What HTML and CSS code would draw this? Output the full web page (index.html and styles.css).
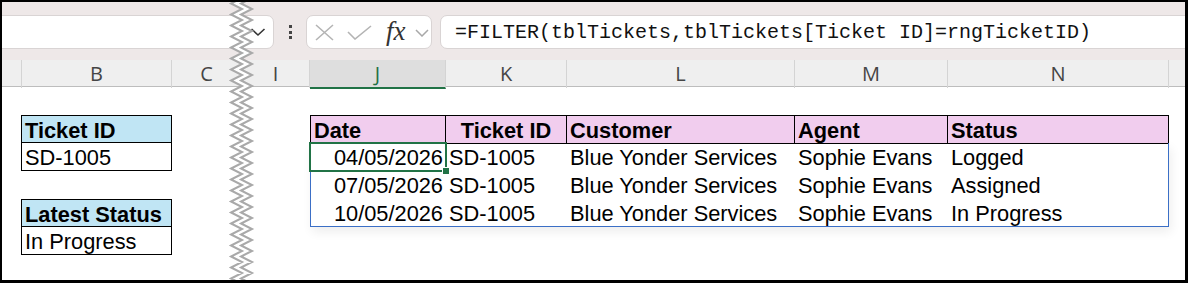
FILE: index.html
```html
<!DOCTYPE html>
<html>
<head>
<meta charset="utf-8">
<link rel="stylesheet" href="styles.css">
</head>
<body>
<div class="frame">
  <div class="fbar">
    <div class="namebox">
      <svg class="nb-chev" width="16" height="10" viewBox="0 0 16 10"><polyline points="1.5,2 8,8 14.5,2" fill="none" stroke="#333" stroke-width="1.6"/></svg>
    </div>
    <div class="dots"><span></span><span></span><span></span></div>
    <div class="fxgroup">
      <svg class="ic-x" width="19" height="17" viewBox="0 0 19 17"><path d="M1 1 L18 16 M18 1 L1 16" stroke="#b4b4b4" stroke-width="1.6" fill="none"/></svg>
      <svg class="ic-check" width="25" height="15" viewBox="0 0 25 15"><polyline points="1,7 8,14 24,1" fill="none" stroke="#b4b4b4" stroke-width="1.6"/></svg>
      <span class="fx">fx</span>
      <svg class="fx-chev" width="14" height="8" viewBox="0 0 14 8"><polyline points="1,1 7,7 13,1" fill="none" stroke="#a8a8a8" stroke-width="1.5"/></svg>
    </div>
    <div class="formula">=FILTER(tblTickets,tblTickets[Ticket ID]=rngTicketID)</div>
  </div>

  <div class="colheads">
    <div class="ch"></div>
    <div class="ch">B</div>
    <div class="ch">C</div>
    <div class="ch">I</div>
    <div class="ch sel">J</div>
    <div class="ch">K</div>
    <div class="ch">L</div>
    <div class="ch">M</div>
    <div class="ch">N</div>
    <div class="ch last"></div>
  </div>

  <div class="sheet">
    <div class="box box-ticket">
      <div class="box-head">Ticket ID</div>
      <div class="box-val">SD-1005</div>
    </div>
    <div class="box box-status">
      <div class="box-head">Latest Status</div>
      <div class="box-val">In Progress</div>
    </div>

    <div class="tbl">
      <div class="thead">
        <div class="th">Date</div>
        <div class="th center">Ticket ID</div>
        <div class="th">Customer</div>
        <div class="th">Agent</div>
        <div class="th">Status</div>
      </div>
      <div class="tbody">
        <div class="tr">
          <div class="td right active">04/05/2026</div>
          <div class="td">SD-1005</div>
          <div class="td">Blue Yonder Services</div>
          <div class="td">Sophie Evans</div>
          <div class="td">Logged</div>
        </div>
        <div class="tr">
          <div class="td right">07/05/2026</div>
          <div class="td">SD-1005</div>
          <div class="td">Blue Yonder Services</div>
          <div class="td">Sophie Evans</div>
          <div class="td">Assigned</div>
        </div>
        <div class="tr">
          <div class="td right">10/05/2026</div>
          <div class="td">SD-1005</div>
          <div class="td">Blue Yonder Services</div>
          <div class="td">Sophie Evans</div>
          <div class="td">In Progress</div>
        </div>
      </div>
    </div>
  </div>

  <svg class="tear" width="30" height="283" viewBox="226 0 30 283">
    <polygon class="tear-fill" points=""/>
    <polyline class="tear-l" points=""/>
    <polyline class="tear-r" points=""/>
  </svg>
</div>
<script>
(function(){
  var l=[], period=11, y=-2, i=0;
  while (y < 290) {
    var xl = (i % 2 === 0) ? 242 : 231;
    l.push([xl, y]);
    y += period/2; i++;
  }
  var lp = l.map(function(p){return p[0]+','+p[1];}).join(' ');
  var rp = l.map(function(p){return (p[0]+10)+','+p[1];}).join(' ');
  var fill = lp + ' ' + l.slice().reverse().map(function(p){return (p[0]+10)+','+p[1];}).join(' ');
  document.querySelector('.tear-l').setAttribute('points', lp);
  document.querySelector('.tear-r').setAttribute('points', rp);
  document.querySelector('.tear-fill').setAttribute('points', fill);
})();
</script>
</body>
</html>
```

FILE: styles.css
```css
html, body {
  margin: 0;
  padding: 0;
  background: #fff;
}

.frame {
  position: relative;
  width: 1188px;
  height: 283px;
  box-sizing: border-box;
  border: 2px solid #000;
  border-right-width: 3px;
  border-bottom-width: 3px;
  overflow: hidden;
  background: #fff;
  font-family: "Liberation Sans", Arial, sans-serif;
  color: #000;
}

/* ---------- formula bar ---------- */
.fbar {
  height: 58px;
  box-sizing: border-box;
  padding-top: 13px;
  background: #eee8e8;
  display: flex;
  align-items: flex-start;
}

.namebox {
  margin-left: -10px;
  width: 282px;
  height: 34px;
  box-sizing: border-box;
  background: #fff;
  border: 1px solid #d9d4d4;
  border-radius: 7px;
  display: flex;
  align-items: center;
  justify-content: flex-end;
  padding-right: 7px;
}

.dots {
  margin-left: 15px;
  width: 4px;
  height: 34px;
  display: flex;
  flex-direction: column;
  justify-content: center;
  gap: 2.5px;
}
.dots span {
  display: block;
  width: 3px;
  height: 3px;
  background: #444;
}

.fxgroup {
  margin-left: 13px;
  width: 126px;
  height: 34px;
  box-sizing: border-box;
  background: #fff;
  border: 1px solid #d9d4d4;
  border-radius: 7px;
  display: flex;
  align-items: center;
  padding-left: 8px;
}
.ic-check { margin-left: 13px; margin-top: 1px; }
.fx {
  margin-left: 14px;
  font-family: "Liberation Serif", "Times New Roman", serif;
  font-style: italic;
  font-size: 27px;
  line-height: 30px;
  color: #333;
  margin-top: -3px;
}
.fx-chev { margin-left: 9px; margin-top: 2px; }

.formula {
  margin-left: 8px;
  flex: 1;
  margin-right: -10px;
  height: 34px;
  box-sizing: border-box;
  background: #fff;
  border: 1px solid #d9d4d4;
  border-radius: 7px;
  padding-left: 14px;
  font-family: "Liberation Mono", "DejaVu Sans Mono", monospace;
  font-size: 20px;
  letter-spacing: 0;
  line-height: 33px;
  color: #111;
  white-space: nowrap;
}

/* ---------- column headers ---------- */
.colheads,
.sheet {
  display: grid;
  grid-template-columns: 20px 150px 70px 68px 136px 121px 228px 153px 221px 1fr;
}
.colheads {
  height: 27px;
  box-sizing: border-box;
  background: #efefef;
  border-bottom: 1px solid #bdbdbd;
}
.ch {
  box-sizing: border-box;
  border-right: 1px solid #d4d4d4;
  font-family: "Open Sans", "Noto Sans", sans-serif;
  font-size: 20px;
  line-height: 27px;
  color: #454545;
  text-align: center;
}
.ch.last { border-right: 0; }
.ch.sel {
  background: #dedede;
  color: #1e7145;
  border-bottom: 2px solid #217346;
  margin-bottom: -1px;
}

/* ---------- sheet ---------- */
.sheet {
  grid-template-rows: 28px 28px 28px 28px 28px 28px 1fr;
  height: 196px;
  font-size: 21.8px;
}

.box {
  grid-column: 2;
  margin-left: -1px;
  border: 1px solid #000;
  display: flex;
  flex-direction: column;
}
.box-ticket { grid-row: 2 / 4; }
.box-status { grid-row: 5 / 7; }
.box-head {
  height: 27px;
  box-sizing: border-box;
  background: #c0e5f4;
  border-bottom: 1px solid #000;
  font-weight: bold;
  padding: 2px 0 0 3px;
  line-height: 25px;
}
.box-val {
  flex: 1;
  padding: 2px 0 0 3px;
  line-height: 25px;
}

.tbl {
  grid-column: 5 / 10;
  grid-row: 2 / 6;
  display: flex;
  flex-direction: column;
}
.thead {
  display: grid;
  grid-template-columns: 136px 121px 228px 153px 221px;
  height: 28px;
}
.th {
  box-sizing: border-box;
  background: #f1cdee;
  border-top: 1px solid #000;
  border-bottom: 1px solid #000;
  border-right: 1px solid #000;
  font-weight: bold;
  line-height: 25px;
  padding: 2px 0 0 3px;
}
.th:first-child { border-left: 1px solid #000; }
.th.center { text-align: center; padding-left: 0; }

.tbody {
  flex: 1;
  border: 1px solid #3b6fc6;
  border-top: 0;
  box-shadow: 2px 5px 10px rgba(0, 0, 0, 0.07);
  display: flex;
  flex-direction: column;
}
.tr {
  display: grid;
  grid-template-columns: 135px 121px 228px 153px 220px;
  height: 28px;
}
.tr:last-child { height: 27px; }
.td {
  position: relative;
  box-sizing: border-box;
  line-height: 26px;
  padding: 2px 0 0 3px;
  white-space: nowrap;
}
.td.right {
  text-align: right;
  padding-left: 0;
  padding-right: 3px;
}
.td.active::after {
  content: "";
  position: absolute;
  top: -1px;
  left: -2px;
  right: -1px;
  bottom: -1px;
  border: 2px solid #217346;
}
.td.active::before {
  content: "";
  position: absolute;
  right: -3px;
  bottom: -3px;
  width: 6px;
  height: 6px;
  background: #217346;
  border-left: 1px solid #fff;
  border-top: 1px solid #fff;
  z-index: 1;
}

/* ---------- torn edge ---------- */
.tear {
  position: absolute;
  left: 224px;
  top: -2px;
}
.tear-fill { fill: #fff; stroke: none; }
.tear-l, .tear-r {
  fill: none;
  stroke: #a9a9a9;
  stroke-width: 2;
}
```
